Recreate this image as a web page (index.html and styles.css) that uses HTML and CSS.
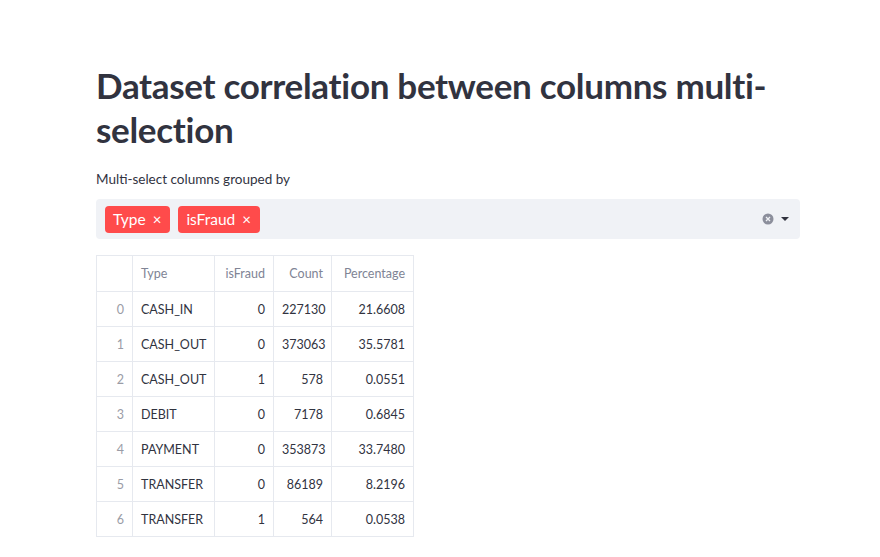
FILE: index.html
```html
<!DOCTYPE html>
<html>
<head>
<meta charset="utf-8">
<link rel="stylesheet" href="styles.css">
</head>
<body>
<main class="page">
  <h1 class="title">Dataset correlation between columns multi-selection</h1>
  <div class="label">Multi-select columns grouped by</div>
  <div class="select">
    <div class="tags">
      <span class="tag">Type <span class="x">×</span></span>
      <span class="tag">isFraud <span class="x">×</span></span>
    </div>
    <div class="controls">
      <svg class="clear" width="12" height="12" viewBox="0 0 12 12"><circle cx="6" cy="6" r="5.5" fill="#8c8f9c"/><path d="M4 4L8 8M8 4L4 8" stroke="#f0f2f6" stroke-width="1.3"/></svg>
      <svg class="caret" width="10" height="6" viewBox="0 0 10 6"><path d="M1 1h8L5 5z" fill="#31333f"/></svg>
    </div>
  </div>
  <table class="grid">
    <colgroup><col class="c0"><col class="c1"><col class="c2"><col class="c3"><col class="c4"></colgroup>
    <thead>
      <tr><th class="idx"></th><th class="l">Type</th><th>isFraud</th><th>Count</th><th>Percentage</th></tr>
    </thead>
    <tbody>
      <tr><td class="idx">0</td><td class="l">CASH_IN</td><td>0</td><td>227130</td><td>21.6608</td></tr>
      <tr><td class="idx">1</td><td class="l">CASH_OUT</td><td>0</td><td>373063</td><td>35.5781</td></tr>
      <tr><td class="idx">2</td><td class="l">CASH_OUT</td><td>1</td><td>578</td><td>0.0551</td></tr>
      <tr><td class="idx">3</td><td class="l">DEBIT</td><td>0</td><td>7178</td><td>0.6845</td></tr>
      <tr><td class="idx">4</td><td class="l">PAYMENT</td><td>0</td><td>353873</td><td>33.7480</td></tr>
      <tr><td class="idx">5</td><td class="l">TRANSFER</td><td>0</td><td>86189</td><td>8.2196</td></tr>
      <tr><td class="idx">6</td><td class="l">TRANSFER</td><td>1</td><td>564</td><td>0.0538</td></tr>
    </tbody>
  </table>
</main>
</body>
</html>
```
FILE: styles.css
```css
html, body { margin: 0; padding: 0; background: #fff; }
body { font-family: "Lato", "Open Sans", sans-serif; color: #31333f; width: 880px; height: 557px; overflow: hidden; }
.page { padding: 63px 80px 0 96px; width: 704px; }
.title { font-size: 35px; font-weight: 700; line-height: 44px; margin: 0 0 19px 0; letter-spacing: -0.3px; color: #31333f; }
.label { font-size: 13.5px; line-height: 18px; margin-bottom: 11px; }
.select { background: #f0f2f6; border-radius: 4px; height: 40px; display: flex; align-items: center; justify-content: space-between; padding: 0 10px 0 9px; box-sizing: border-box; }
.tags { display: flex; gap: 8px; }
.tag { background: #ff4b4b; color: #fff; border-radius: 4px; height: 27px; display: inline-flex; align-items: center; padding: 0 9px 0 8px; font-size: 15.5px; }
.tag .x { font-size: 15px; margin-left: 7px; }
.controls { display: flex; align-items: center; gap: 6px; }
.grid { border-collapse: collapse; margin-top: 16px; font-size: 12.5px; table-layout: fixed; width: 318px; }
.grid .c0 { width: 36px; }
.grid .c1 { width: 82px; }
.grid .c2 { width: 59px; }
.grid .c3 { width: 58px; }
.grid .c4 { width: 82px; }
.grid th, .grid td { border: 1px solid #e6e9ef; height: 34px; padding: 0 8px; text-align: right; white-space: nowrap; overflow: hidden; }
.grid th { font-weight: 400; color: #808495; height: 35px; }
.grid .l { text-align: left; }
.grid .idx { color: #9a9ca6; background: #fff; }
```
